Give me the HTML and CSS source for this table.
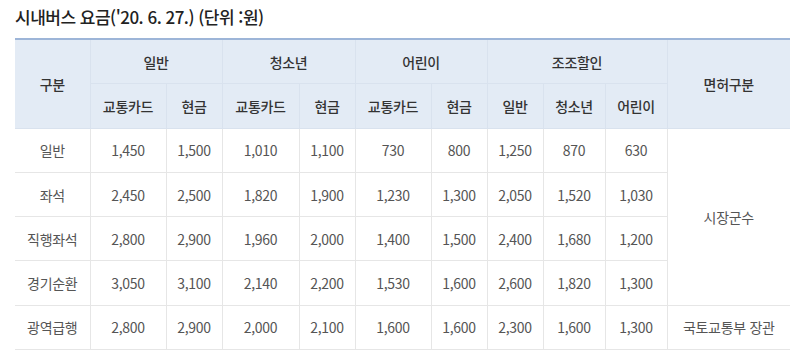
FILE: index.html
```html
<!DOCTYPE html>
<html lang="ko">
<head>
    <meta charset="UTF-8">
    <meta name="viewport" content="width=device-width, initial-scale=1.0">
    <title>시내버스 요금</title>
    <link rel="stylesheet" href="styles.css">
</head>
<body>
    <div class="fare-wrap">
        <h3 class="fare-title">시내버스 요금('20. 6. 27.) (단위 :원)</h3>
        <table class="fare-table">
            <colgroup>
                <col style="width:75px">
                <col style="width:76px">
                <col style="width:56px">
                <col style="width:77px">
                <col style="width:56px">
                <col style="width:76px">
                <col style="width:56px">
                <col style="width:56px">
                <col style="width:62px">
                <col style="width:62px">
                <col>
            </colgroup>
            <thead>
                <tr>
                    <th rowspan="2">구분</th>
                    <th colspan="2">일반</th>
                    <th colspan="2">청소년</th>
                    <th colspan="2">어린이</th>
                    <th colspan="3">조조할인</th>
                    <th rowspan="2">면허구분</th>
                </tr>
                <tr>
                    <th>교통카드</th>
                    <th>현금</th>
                    <th>교통카드</th>
                    <th>현금</th>
                    <th>교통카드</th>
                    <th>현금</th>
                    <th>일반</th>
                    <th>청소년</th>
                    <th>어린이</th>
                </tr>
            </thead>
            <tbody>
                <tr>
                    <td>일반</td>
                    <td>1,450</td><td>1,500</td><td>1,010</td><td>1,100</td><td>730</td><td>800</td>
                    <td>1,250</td><td>870</td><td>630</td>
                    <td rowspan="4">시장군수</td>
                </tr>
                <tr>
                    <td>좌석</td>
                    <td>2,450</td><td>2,500</td><td>1,820</td><td>1,900</td><td>1,230</td><td>1,300</td>
                    <td>2,050</td><td>1,520</td><td>1,030</td>
                </tr>
                <tr>
                    <td>직행좌석</td>
                    <td>2,800</td><td>2,900</td><td>1,960</td><td>2,000</td><td>1,400</td><td>1,500</td>
                    <td>2,400</td><td>1,680</td><td>1,200</td>
                </tr>
                <tr>
                    <td>경기순환</td>
                    <td>3,050</td><td>3,100</td><td>2,140</td><td>2,200</td><td>1,530</td><td>1,600</td>
                    <td>2,600</td><td>1,820</td><td>1,300</td>
                </tr>
                <tr>
                    <td>광역급행</td>
                    <td>2,800</td><td>2,900</td><td>2,000</td><td>2,100</td><td>1,600</td><td>1,600</td>
                    <td>2,300</td><td>1,600</td><td>1,300</td>
                    <td>국토교통부 장관</td>
                </tr>
            </tbody>
        </table>
    </div>
</body>
</html>
```

FILE: styles.css
```css
body {
    margin: 0;
    background-color: #fff;
    font-family: "Noto Sans CJK KR", "Noto Sans", sans-serif;
    color: #555;
}
.fare-wrap {
    padding: 6px 10px 0 15px;
}
.fare-title {
    margin: 0 0 10px 0;
    font-size: 17px;
    font-weight: 500;
    line-height: 22px;
    color: #222;
    letter-spacing: -0.5px;
}
.fare-table {
    width: 775px;
    table-layout: fixed;
    border-collapse: collapse;
    border-top: 2px solid #9db5d8;
    font-size: 14px;
    letter-spacing: -0.3px;
}
.fare-table th,
.fare-table td {
    height: 43.3px;
    padding: 0;
    text-align: center;
    vertical-align: middle;
    border: 1px solid #e6e6e6;
}
.fare-table th {
    background-color: #e3ebf5;
    border-color: #d9e2ee;
    font-weight: 500;
    color: #333;
}
.fare-table td {
    font-weight: 400;
    color: #555;
}
.fare-table tr > :first-child {
    border-left: none;
}
.fare-table tr > :last-child {
    border-right: none;
}
```
